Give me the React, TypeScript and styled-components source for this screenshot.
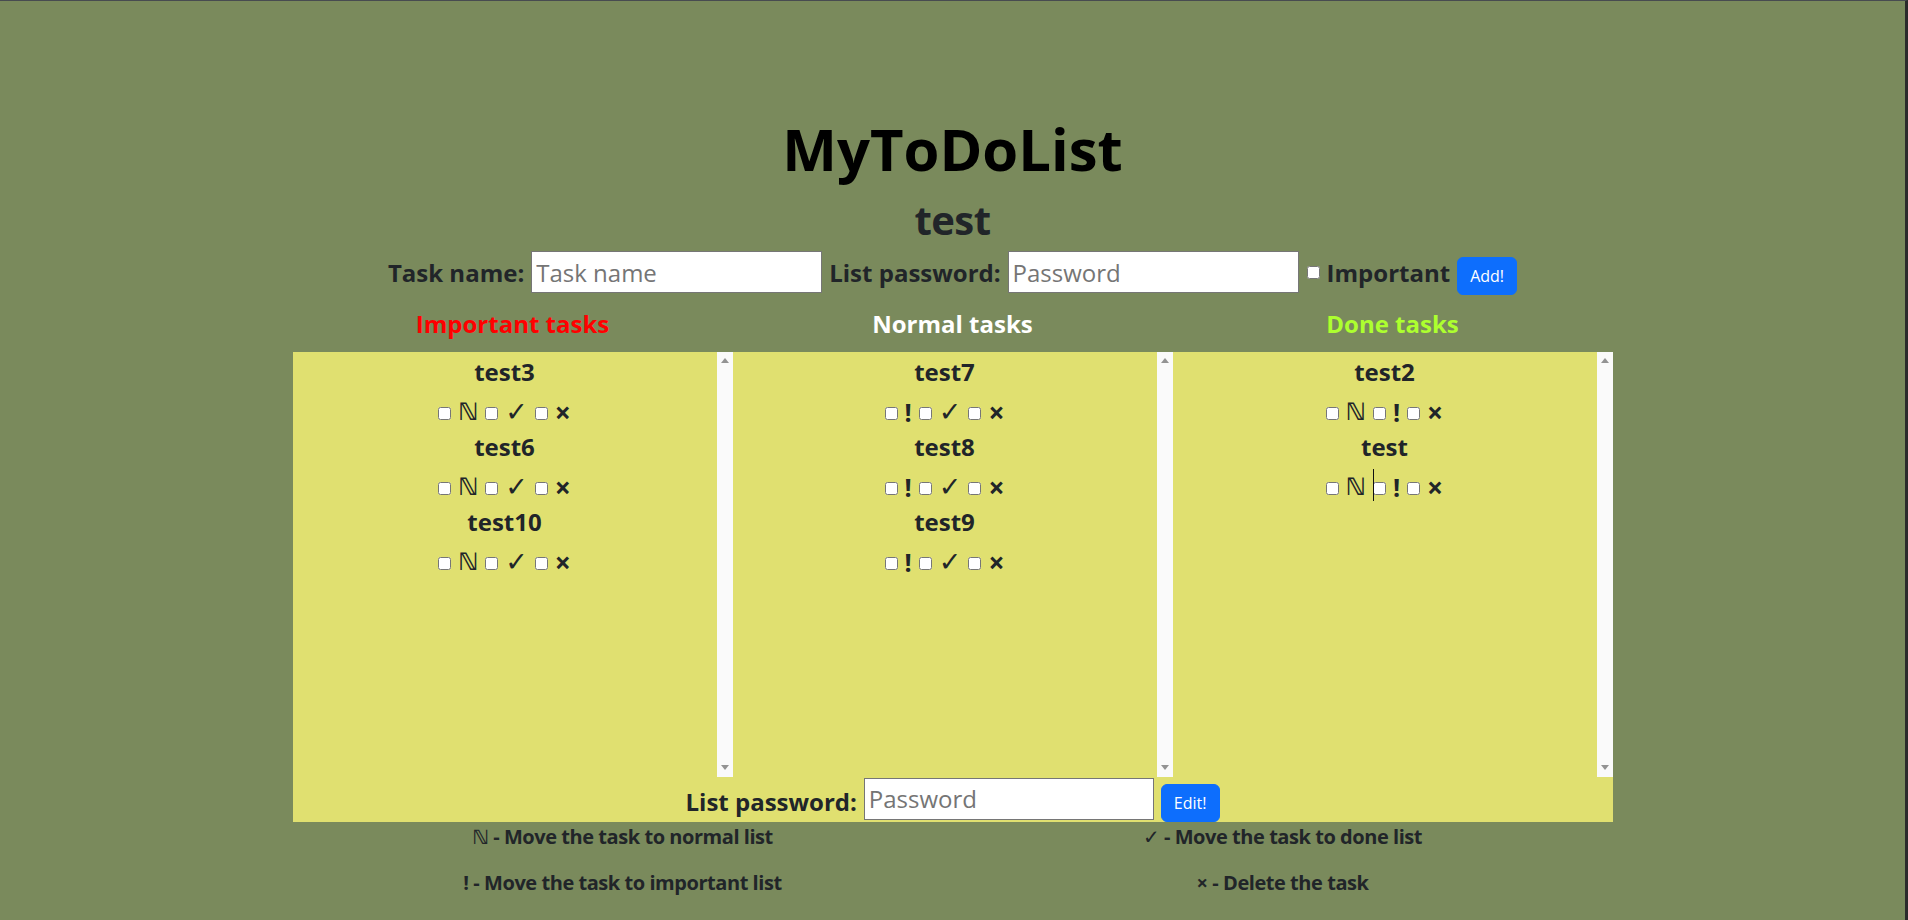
import React from "react";
import styled, { createGlobalStyle } from "styled-components";

const GlobalStyle = createGlobalStyle`
  html, body { margin: 0; padding: 0; }
  body {
    font-family: "Open Sans", "DejaVu Sans", sans-serif;
    color: #212529;
    background: #7a8a5c;
  }
  * { box-sizing: border-box; }
`;

const Page = styled.div`
  min-height: 100vh;
  background: #7a8a5c;
  border-top: 1px solid #474b50;
  border-right: 3px solid #2b2b2b;
  padding-top: 112px;
  display: flex;
  flex-direction: column;
  align-items: center;
`;

const Title = styled.h1`
  margin: 0;
  font-size: 58px;
  line-height: 72px;
  font-weight: 700;
  color: #000;
`;

const ListName = styled.h2`
  margin: 11px 0 0;
  font-size: 40px;
  line-height: 48px;
  font-weight: 700;
  letter-spacing: -0.5px;
  color: #212529;
`;

const FormRow = styled.div`
  display: flex;
  align-items: baseline;
  justify-content: center;
  gap: 7px;
  margin-top: 7px;
`;

const BottomRow = styled.div`
  display: flex;
  align-items: flex-end;
  justify-content: center;
  gap: 7px;
  height: 45px;
`;

const Label = styled.label<{ $drop?: number }>`
  font-size: 24px;
  font-weight: 700;
  line-height: 30px;
  color: #212529;
  margin-bottom: ${(p) => p.$drop ?? 0}px;
`;

const TextInput = styled.input<{ $w: number; $drop?: number }>`
  width: ${(p) => p.$w}px;
  height: 42px;
  padding: 1px 4px;
  margin-bottom: ${(p) => p.$drop ?? 0}px;
  font-family: "Open Sans", sans-serif;
  font-size: 24px;
  color: #212529;
  background: #fff;
  border: 1px solid #767676;
  border-radius: 0;
  &::placeholder { color: #757575; }
`;

const Check = styled.input.attrs({ type: "checkbox" })`
  width: 13px;
  height: 13px;
  margin: 0;
`;

const ImportantCheck = styled(Check)`
  align-self: center;
  margin-left: 1px;
`;

const Button = styled.button`
  font-family: "Open Sans", sans-serif;
  font-size: 16px;
  line-height: 24px;
  padding: 6px 12px;
  color: #fff;
  background: #0d6efd;
  border: 1px solid #0d6efd;
  border-radius: 6px;
`;

const HeaderGrid = styled.div`
  width: 1320px;
  display: grid;
  grid-template-columns: repeat(3, 1fr);
  margin-top: 14px;
`;

const ColumnTitle = styled.h4<{ $color: string }>`
  margin: 0;
  font-size: 24px;
  line-height: 30px;
  font-weight: 700;
  text-align: center;
  color: ${(p) => p.$color};
`;

const Panel = styled.div`
  width: 1320px;
  margin-top: 13px;
  background: #e0e070;
  display: flex;
  flex-direction: column;
`;

const Columns = styled.div`
  display: grid;
  grid-template-columns: repeat(3, 1fr);
`;

const Column = styled.div`
  display: flex;
  height: 425px;
`;

const TaskList = styled.div`
  flex: 1;
  overflow: hidden;
  padding-top: 5px;
`;

const ScrollTrack = styled.div`
  width: 16px;
  background: #fafafa;
  display: flex;
  flex-direction: column;
  justify-content: space-between;
  align-items: center;
  padding: 6px 0 7px;
`;

const Arrow = styled.span<{ $dir: "up" | "down" }>`
  width: 0;
  height: 0;
  border-left: 4.5px solid transparent;
  border-right: 4.5px solid transparent;
  ${(p) =>
    p.$dir === "up"
      ? "border-bottom: 5px solid #939393;"
      : "border-top: 5px solid #939393;"}
`;

const TaskName = styled.h4`
  margin: 0;
  font-size: 24px;
  line-height: 30px;
  font-weight: 700;
  text-align: center;
  color: #212529;
`;

const TaskRow = styled.div`
  display: flex;
  justify-content: center;
  align-items: center;
  gap: 7px;
  height: 45px;
  padding-top: 8px;
`;

const glyphFont: Record<string, string> = {
  N: '"DejaVu Sans", sans-serif',
  done: '"DejaVu Sans", sans-serif',
  imp: '"Open Sans", sans-serif',
  delete: '"Open Sans", sans-serif',
};

const glyphSize: Record<string, number> = { N: 24, done: 27, imp: 25, delete: 28 };

const Glyph = styled.span<{ $kind: string }>`
  font-family: ${(p) => glyphFont[p.$kind]};
  font-size: ${(p) => glyphSize[p.$kind]}px;
  font-weight: 700;
  line-height: 30px;
  color: #212529;
  margin-bottom: 3px;
`;

const CheckWrap = styled.span`
  position: relative;
  display: inline-flex;
`;

const Caret = styled.span`
  position: absolute;
  left: 0;
  top: -13px;
  width: 1px;
  height: 32px;
  background: #111;
`;

const Legend = styled.div`
  width: 1320px;
  display: grid;
  grid-template-columns: repeat(2, 1fr);
`;

const LegendItem = styled.p`
  margin: 0 0 16px;
  font-size: 20px;
  line-height: 30px;
  font-weight: 700;
  letter-spacing: -0.45px;
  text-align: center;
  color: #212529;
`;

const glyphs: Record<string, string> = {
  N: "\u2115",
  imp: "!",
  done: "\u2713",
  delete: "\u00d7",
};

type Col = { title: string; color: string; tasks: string[]; actions: string[] };

const columns: Col[] = [
  { title: "Important tasks", color: "#ff0000", tasks: ["test3", "test6", "test10"], actions: ["N", "done", "delete"] },
  { title: "Normal tasks", color: "#ffffff", tasks: ["test7", "test8", "test9"], actions: ["imp", "done", "delete"] },
  { title: "Done tasks", color: "#adff2f", tasks: ["test2", "test"], actions: ["N", "imp", "delete"] },
];

export default function App() {
  return (
    <>
      <GlobalStyle />
      <Page>
        <Title>MyToDoList</Title>
        <ListName>test</ListName>
        <FormRow>
          <Label>Task name:</Label>
          <TextInput $w={291} placeholder="Task name" />
          <Label>List password:</Label>
          <TextInput $w={291} type="password" placeholder="Password" />
          <ImportantCheck />
          <Label>Important</Label>
          <Button>Add!</Button>
        </FormRow>
        <HeaderGrid>
          {columns.map((c) => (
            <ColumnTitle key={c.title} $color={c.color}>
              {c.title}
            </ColumnTitle>
          ))}
        </HeaderGrid>
        <Panel>
          <Columns>
            {columns.map((c, ci) => (
              <Column key={c.title}>
                <TaskList>
                  {c.tasks.map((t, ti) => (
                    <div key={t}>
                      <TaskName>{t}</TaskName>
                      <TaskRow>
                        {c.actions.map((a, ai) => (
                          <React.Fragment key={a}>
                            <CheckWrap>
                              <Check />
                              {ci === 2 && ti === 1 && ai === 1 && <Caret />}
                            </CheckWrap>
                            <Glyph $kind={a}>{glyphs[a]}</Glyph>
                          </React.Fragment>
                        ))}
                      </TaskRow>
                    </div>
                  ))}
                </TaskList>
                <ScrollTrack>
                  <Arrow $dir="up" />
                  <Arrow $dir="down" />
                </ScrollTrack>
              </Column>
            ))}
          </Columns>
          <BottomRow>
            <Label $drop={5}>List password:</Label>
            <TextInput $w={290} $drop={2} type="password" placeholder="Password" />
            <Button>Edit!</Button>
          </BottomRow>
        </Panel>
        <Legend>
          <LegendItem>{"\u2115"} - Move the task to normal list</LegendItem>
          <LegendItem>{"\u2713"} - Move the task to done list</LegendItem>
          <LegendItem>! - Move the task to important list</LegendItem>
          <LegendItem>{"\u00d7"} - Delete the task</LegendItem>
        </Legend>
      </Page>
    </>
  );
}
